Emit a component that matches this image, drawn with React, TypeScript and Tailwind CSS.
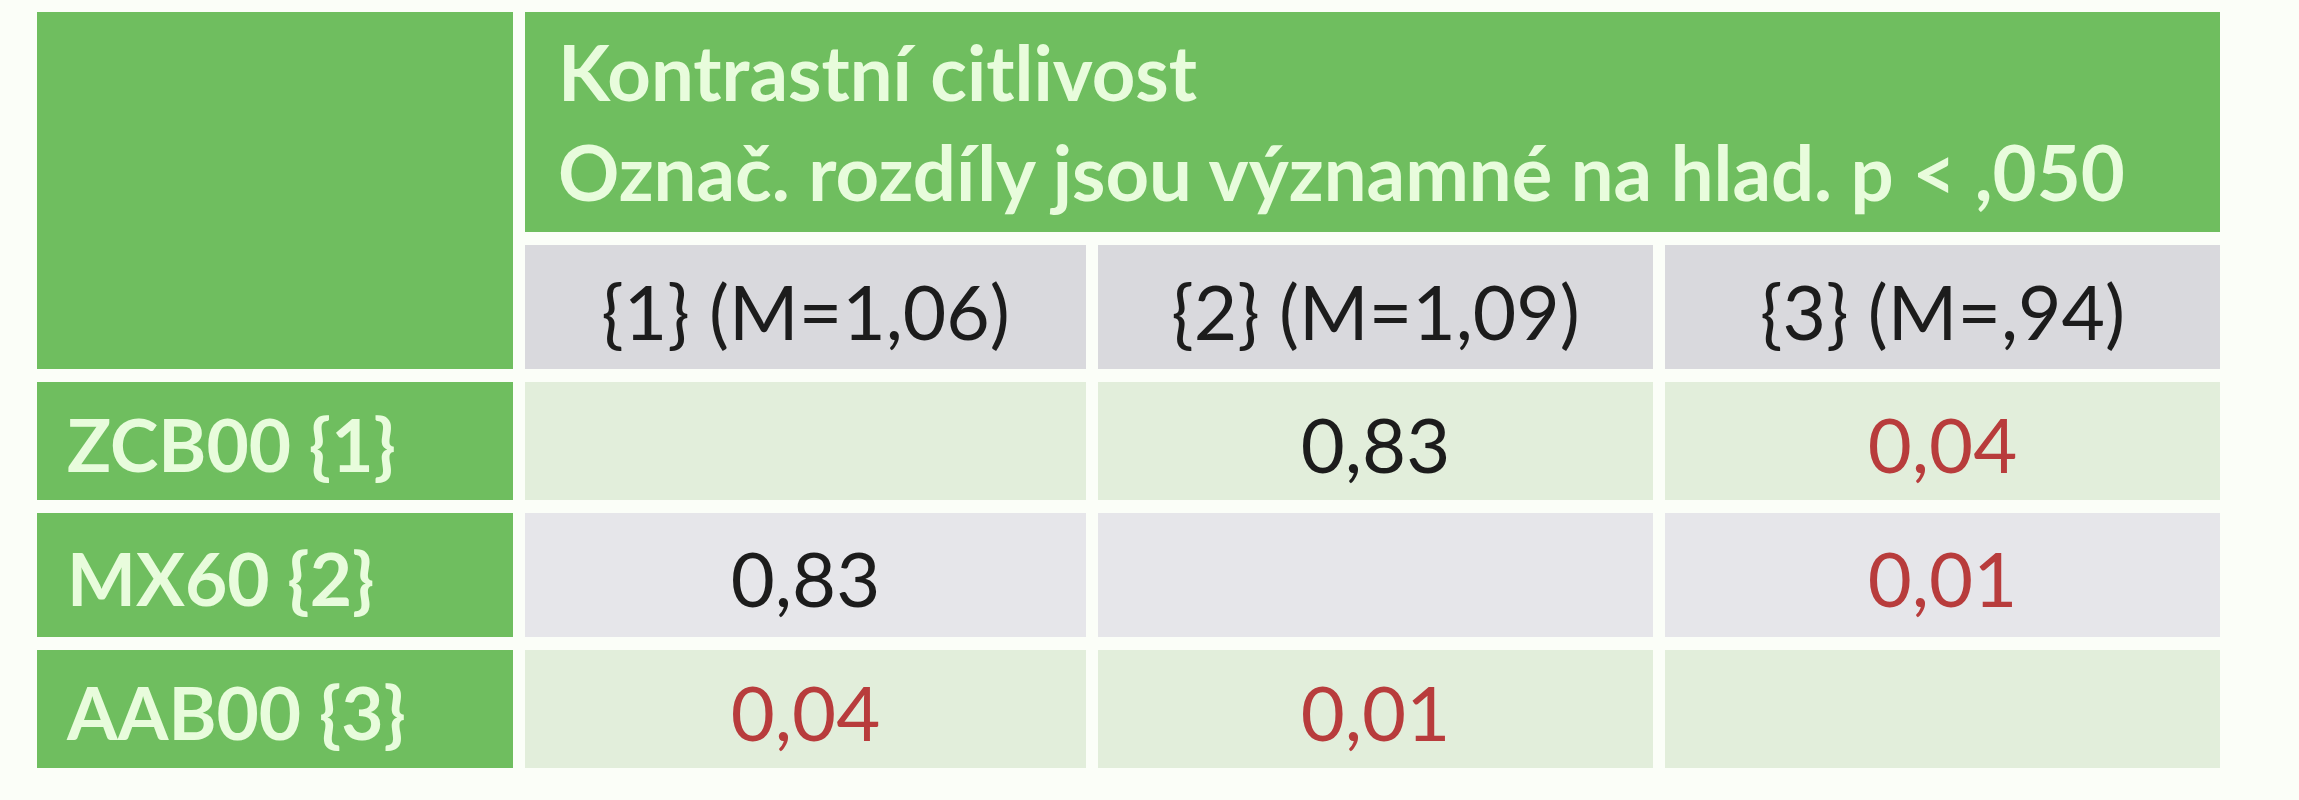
export default function App() {
  const cols = ["{1} (M=1,06)", "{2} (M=1,09)", "{3} (M=,94)"];

  // p-values matrix, empty string = diagonal
  const rows = [
    { label: "ZCB00 {1}", bg: "bg-[#e2eedb]", cells: ["", "0,83", "0,04"] },
    { label: "MX60 {2}", bg: "bg-[#e6e6ea]", cells: ["0,83", "", "0,01"] },
    { label: "AAB00 {3}", bg: "bg-[#e2eedb]", cells: ["0,04", "0,01", ""] },
  ];

  const isSignificant = (v: string) => v !== "" && parseFloat(v.replace(",", ".")) < 0.05;

  return (
    <div className="w-[2299px] h-[800px] bg-[#fbfef8] pt-[12px] pl-[37px] font-['Lato','Liberation_Sans',sans-serif]">
      <div className="grid grid-cols-[476px_561px_555px_555px] grid-rows-[220px_124px_118px_124px_118px] gap-x-[12px] gap-y-[13px]">
        {/* top-left empty corner */}
        <div className="row-span-2 bg-[#6fbe5f]"></div>

        {/* title */}
        <div className="col-span-3 bg-[#6fbe5f] pl-[33px] pt-[10px] text-[#e8fcdc] font-bold text-[76px] leading-[100px]">
          <div>Kontrastní citlivost</div>
          <div>Označ. rozdíly jsou významné na hlad. p &lt; ,050</div>
        </div>

        {/* column headers */}
        {cols.map((c) => (
          <div key={c} className="bg-[#d9d9dd] flex items-center justify-center pt-[8px] text-[75px] text-[#1c1c1c]">
            {c}
          </div>
        ))}

        {/* body rows */}
        {rows.map((r) => (
          <>
            <div key={r.label} className="bg-[#6fbe5f] flex items-center pl-[30px] pt-[8px] text-[73px] font-bold text-[#e8fcdc]">
              {r.label}
            </div>
            {r.cells.map((v, i) => (
              <div
                key={r.label + i}
                className={`${r.bg} flex items-center justify-center pt-[6px] text-[76px] ${isSignificant(v) ? "text-[#b83c3c]" : "text-[#1c1c1c]"}`}
              >
                {v}
              </div>
            ))}
          </>
        ))}
      </div>
    </div>
  );
}
